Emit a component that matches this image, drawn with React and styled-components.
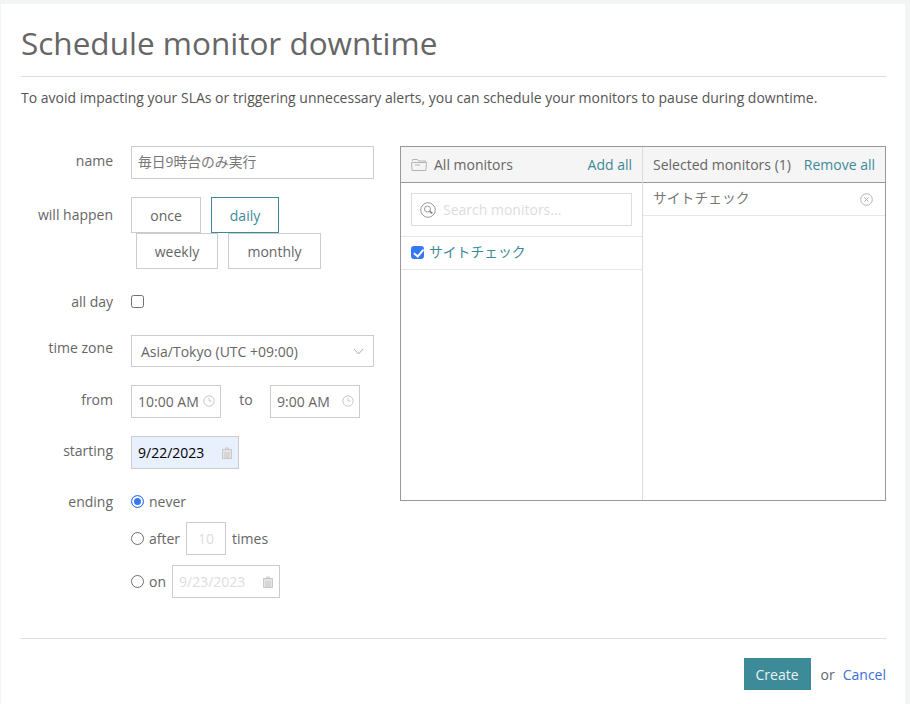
import React from 'react';
import styled, { createGlobalStyle } from 'styled-components';

const GlobalStyle = createGlobalStyle`
  html, body {
    margin: 0;
    padding: 0;
    height: 100%;
    background: #f3f5f5;
    overflow: hidden;
  }
  * { box-sizing: border-box; }
  body {
    font-family: 'Open Sans', 'Noto Sans CJK JP', sans-serif;
    font-size: 14px;
    color: #666;
  }
`;

const teal = '#3d8a98';

const Card = styled.div`
  margin: 4px 5px 0 1px;
  height: 700px;
  background: #fff;
  padding: 0 19px 0 20px;
`;

const Title = styled.h1`
  margin: 0;
  height: 73px;
  padding-top: 17px;
  font-size: 31.5px;
  line-height: 44px;
  font-weight: 400;
  color: #666;
  border-bottom: 1px solid #ddd;
`;

const Intro = styled.p`
  margin: 0;
  height: 69px;
  padding-top: 11px;
  font-size: 14px;
  line-height: 20px;
  color: #555;
`;

const Columns = styled.div`
  display: flex;
  height: 493px;
  border-bottom: 1px solid #ddd;
`;

const Form = styled.div`
  width: 379px;
  display: flex;
  flex-direction: column;
`;

const Row = styled.div`
  display: flex;
  align-items: flex-start;
  margin-bottom: ${(p) => p.$gap ?? 18}px;
`;

const Label = styled.label`
  width: 92px;
  margin-right: 18px;
  flex: none;
  text-align: right;
  font-size: 14px;
  line-height: ${(p) => p.$line ?? 20}px;
  padding-top: ${(p) => p.$top ?? 5}px;
  color: #666;
`;

const Field = styled.div`
  position: relative;
  width: ${(p) => p.$w}px;
  height: ${(p) => p.$h ?? 33}px;
  flex: none;
`;

const Input = styled.input`
  width: 100%;
  height: 100%;
  border: 1px solid #ccc;
  border-radius: 0;
  outline: none;
  padding: 0 0 ${(p) => (p.$cjk ? 3 : 0)}px ${(p) => (p.$centered ? 0 : 6)}px;
  text-align: ${(p) => (p.$centered ? 'center' : 'left')};
  font-family: inherit;
  font-size: ${(p) => (p.$cjk ? 13.8 : 14)}px;
  color: ${(p) => (p.$autofilled ? '#000' : p.$cjk ? '#777' : '#666')};
  background: ${(p) => (p.$autofilled ? '#e8effd' : '#fff')};
  &:disabled {
    color: #ddd;
    background: #fff;
  }
`;

const FieldIcon = styled.svg`
  position: absolute;
  top: ${(p) => p.$top ?? 10}px;
  right: ${(p) => p.$right ?? 6}px;
  width: 12px;
  height: 12px;
  fill: none;
  stroke: #c8c8c8;
  stroke-width: 1;
`;

const Choices = styled.div`
  display: flex;
  flex-direction: column;
`;

const ChoiceLine = styled.div`
  display: flex;
  gap: 10px;
  padding-left: ${(p) => (p.$indent ? 5 : 0)}px;
`;

const Choice = styled.button`
  width: ${(p) => p.$w}px;
  height: 36px;
  padding: 0;
  background: #fff;
  border: 1px solid ${(p) => (p.$active ? teal : '#ccc')};
  font-family: inherit;
  font-size: 14px;
  color: ${(p) => (p.$active ? teal : '#666')};
`;

const Check = styled.input.attrs({ type: 'checkbox' })`
  appearance: none;
  flex: none;
  position: relative;
  width: 13px;
  height: 13px;
  margin: 0;
  background: #fff;
  border: 1px solid #6f6f6f;
  border-radius: 2.5px;
  &:checked {
    background: #3478f6;
    border-color: #3478f6;
  }
  &:checked::after {
    content: '';
    position: absolute;
    left: 3.5px;
    top: 0.5px;
    width: 3.5px;
    height: 7.5px;
    border: solid #fff;
    border-width: 0 2px 2px 0;
    transform: rotate(40deg);
  }
`;

const Radio = styled.input.attrs({ type: 'radio' })`
  appearance: none;
  flex: none;
  width: 13px;
  height: 13px;
  margin: 0;
  background: #fff;
  border: 1px solid #6f6f6f;
  border-radius: 50%;
  &:checked {
    border: 1px solid #3478f6;
    box-shadow: inset 0 0 0 2px #fff;
    background: #3478f6;
  }
`;

const SelectBox = styled(Field)`
  display: flex;
  align-items: center;
  justify-content: space-between;
  border: 1px solid #ccc;
  padding: 0 9px;
  font-size: 14px;
  color: #666;
`;

const Chevron = styled.svg`
  width: 11px;
  height: 7px;
  fill: none;
  stroke: #aaa;
  stroke-width: 1;
`;

const TimeTo = styled.span`
  width: 49px;
  text-align: center;
  padding: 5px 0 0 1px;
  line-height: 20px;
`;

const EndingStack = styled.div`
  display: flex;
  flex-direction: column;
`;

const EndingLine = styled.div`
  display: flex;
  align-items: center;
  height: ${(p) => p.$h}px;
  margin-bottom: ${(p) => p.$gap ?? 0}px;
  font-size: 14px;
`;

const EndingText = styled.span`
  margin: 0 ${(p) => p.$right ?? 0}px 0 ${(p) => p.$left ?? 5}px;
`;

const Picker = styled.div`
  width: 486px;
  height: 355px;
  display: flex;
  border: 1px solid #999;
`;

const Pane = styled.div`
  display: flex;
  flex-direction: column;
  width: ${(p) => p.$w}px;
  flex: none;
  & + & {
    border-left: 1px solid #ddd;
  }
`;

const PaneHead = styled.div`
  height: 36px;
  flex: none;
  display: flex;
  align-items: center;
  justify-content: space-between;
  padding: 0 10px;
  background: #f5f5f5;
  border-bottom: 1px solid #999;
  font-size: 14px;
  color: #666;
`;

const PaneTitle = styled.span`
  display: flex;
  align-items: center;
  gap: 7px;
`;

const FolderIcon = styled.svg`
  width: 16px;
  height: 13px;
  fill: none;
  stroke: #b4b4b4;
  stroke-width: 1;
`;

const TealLink = styled.a`
  color: ${teal};
  font-size: 14px;
`;

const SearchWrap = styled.div`
  height: 54px;
  flex: none;
  padding: 10px;
  border-bottom: 1px solid #e6e6e6;
`;

const SearchBox = styled.div`
  height: 33px;
  display: flex;
  align-items: center;
  gap: 7px;
  padding-left: 8px;
  border: 1px solid #ddd;
`;

const SearchIcon = styled.svg`
  width: 16px;
  height: 16px;
  fill: none;
  stroke: #999;
  stroke-width: 1;
  flex: none;
`;

const SearchInput = styled.input`
  flex: 1;
  min-width: 0;
  border: 0;
  outline: none;
  padding: 0;
  font-family: inherit;
  font-size: 14px;
  &::placeholder {
    color: #ddd;
    opacity: 1;
  }
`;

const MonitorRow = styled.div`
  height: 33px;
  flex: none;
  display: flex;
  align-items: center;
  justify-content: space-between;
  padding: 0 ${(p) => p.$right ?? 10}px 0 10px;
  border-bottom: 1px solid #e6e6e6;
  font-size: 13.8px;
  color: ${(p) => (p.$link ? teal : '#777')};
`;

const MonitorName = styled.span`
  display: flex;
  align-items: center;
  gap: 5px;
  padding-bottom: 2px;
`;

const MonitorText = styled.span`
  padding-bottom: ${(p) => p.$lift ?? 3}px;
`;

const RemoveIcon = styled.svg`
  width: 13px;
  height: 13px;
  fill: none;
  stroke: #b4b4b4;
  stroke-width: 1;
`;

const Footer = styled.div`
  display: flex;
  align-items: center;
  justify-content: flex-end;
  padding-top: 19px;
  font-size: 14px;
`;

const Create = styled.button`
  width: 67px;
  height: 32px;
  padding: 0;
  border: 0;
  background: ${teal};
  color: #e8f3f5;
  font-family: inherit;
  font-size: 14px;
`;

const Or = styled.span`
  margin: 0 8px 0 10px;
  color: #666;
`;

const Cancel = styled.a`
  color: #3a6fd8;
`;

const ClockGlyph = () => (
  <FieldIcon viewBox="0 0 12 12">
    <circle cx="6" cy="6" r="5.2" />
    <path d="M6 2.8V6h2.6" />
  </FieldIcon>
);

const CalendarGlyph = () => (
  <FieldIcon viewBox="0 0 12 12" $top={11} $right={6}>
    <path d="M1.5 2.5h9v9h-9z" fill="#e4e4e4" />
    <path d="M4.5 2.5V1h3v1.5M3 6h6M3 8h6M3 10h6" />
  </FieldIcon>
);

export default function App() {
  return (
    <>
      <GlobalStyle />
      <Card>
        <Title>Schedule monitor downtime</Title>
        <Intro>
          To avoid impacting your SLAs or triggering unnecessary alerts, you can schedule your monitors to pause during downtime.
        </Intro>
        <Columns>
          <Form>
            <Row>
              <Label>name</Label>
              <Field $w={243}>
                <Input $cjk defaultValue="毎日9時台のみ実行" />
              </Field>
            </Row>
            <Row $gap={26}>
              <Label $top={8}>will happen</Label>
              <Choices>
                <ChoiceLine>
                  <Choice $w={70}>once</Choice>
                  <Choice $w={68} $active>daily</Choice>
                </ChoiceLine>
                <ChoiceLine $indent>
                  <Choice $w={82}>weekly</Choice>
                  <Choice $w={93}>monthly</Choice>
                </ChoiceLine>
              </Choices>
            </Row>
            <Row $gap={26}>
              <Label $top={0} $line={14}>all day</Label>
              <Check />
            </Row>
            <Row>
              <Label $top={3}>time zone</Label>
              <SelectBox $w={243} $h={32}>
                Asia/Tokyo (UTC +09:00)
                <Chevron viewBox="0 0 11 7">
                  <path d="M1 1l4.5 5L10 1" />
                </Chevron>
              </SelectBox>
            </Row>
            <Row>
              <Label>from</Label>
              <Field $w={90} $h={33}>
                <Input defaultValue="10:00 AM" />
                <ClockGlyph />
              </Field>
              <TimeTo>to</TimeTo>
              <Field $w={90} $h={33}>
                <Input defaultValue="9:00 AM" />
                <ClockGlyph />
              </Field>
            </Row>
            <Row $gap={23}>
              <Label $top={5}>starting</Label>
              <Field $w={108} $h={33}>
                <Input $autofilled defaultValue="9/22/2023" />
                <CalendarGlyph />
              </Field>
            </Row>
            <Row $gap={0}>
              <Label $top={0}>ending</Label>
              <EndingStack>
                <EndingLine $h={18} $gap={12}>
                  <Radio name="ending" defaultChecked />
                  <EndingText>never</EndingText>
                </EndingLine>
                <EndingLine $h={32} $gap={11}>
                  <Radio name="ending" />
                  <EndingText $right={6}>after</EndingText>
                  <Field $w={40} $h={33}>
                    <Input $centered disabled defaultValue="10" />
                  </Field>
                  <EndingText $left={6}>times</EndingText>
                </EndingLine>
                <EndingLine $h={33}>
                  <Radio name="ending" />
                  <EndingText $right={6}>on</EndingText>
                  <Field $w={108} $h={33}>
                    <Input disabled defaultValue="9/23/2023" />
                    <CalendarGlyph />
                  </Field>
                </EndingLine>
              </EndingStack>
            </Row>
          </Form>
          <Picker>
            <Pane $w={241}>
              <PaneHead>
                <PaneTitle>
                  <FolderIcon viewBox="0 0 16 13">
                    <path d="M1.5 3V1.5h5l1 1.5h7v1" />
                    <path d="M.5 4.5h15l-.6 8H1.1z" />
                    <path d="M4 7h5" />
                  </FolderIcon>
                  All monitors
                </PaneTitle>
                <TealLink>Add all</TealLink>
              </PaneHead>
              <SearchWrap>
                <SearchBox>
                  <SearchIcon viewBox="0 0 16 16">
                    <circle cx="8" cy="8" r="7.3" />
                    <circle cx="7.5" cy="7" r="3" />
                    <path d="M9.7 9.2l2.6 2.3" strokeWidth="1.5" stroke="#777" />
                  </SearchIcon>
                  <SearchInput placeholder="Search monitors..." />
                </SearchBox>
              </SearchWrap>
              <MonitorRow $link>
                <MonitorName>
                  <Check defaultChecked />
                  <MonitorText>サイトチェック</MonitorText>
                </MonitorName>
              </MonitorRow>
            </Pane>
            <Pane $w={243}>
              <PaneHead>
                <span>Selected monitors (1)</span>
                <TealLink>Remove all</TealLink>
              </PaneHead>
              <MonitorRow $right={12}>
                <MonitorText $lift={5}>サイトチェック</MonitorText>
                <RemoveIcon viewBox="0 0 13 13">
                  <circle cx="6.5" cy="6.5" r="5.8" />
                  <path d="M4.3 4.3l4.4 4.4M8.7 4.3l-4.4 4.4" />
                </RemoveIcon>
              </MonitorRow>
            </Pane>
          </Picker>
        </Columns>
        <Footer>
          <Create>Create</Create>
          <Or>or</Or>
          <Cancel>Cancel</Cancel>
        </Footer>
      </Card>
    </>
  );
}
